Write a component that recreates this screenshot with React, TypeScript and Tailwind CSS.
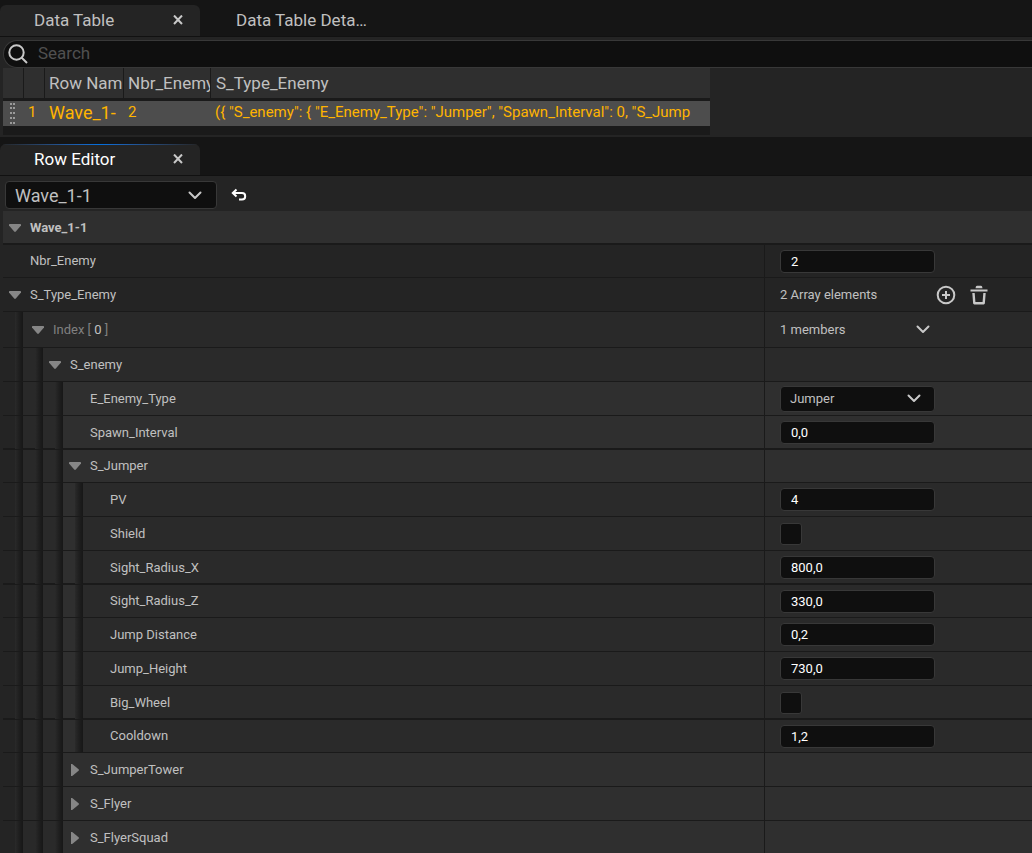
import { useState, type ReactNode } from "react";
import clsx from "clsx";

type Control = "text" | "bool" | "enum" | "array" | "members";

interface Property {
  name: string;
  depth: number;
  control?: Control;
  value?: string;
  expanded?: boolean;
  index?: number;
  size?: "short" | "tall";
  // Every few rows the separator is two pixels thick
  thick?: boolean;
}

const properties: Property[] = [
  { name: "Nbr_Enemy", depth: 0, control: "text", value: "2", size: "short" },
  { name: "S_Type_Enemy", depth: 0, control: "array", value: "2 Array elements", expanded: true },
  { name: "Index", depth: 1, control: "members", value: "1 members", expanded: true, index: 0, size: "tall" },
  { name: "S_enemy", depth: 2, expanded: true },
  { name: "E_Enemy_Type", depth: 3, control: "enum", value: "Jumper" },
  { name: "Spawn_Interval", depth: 3, control: "text", value: "0,0", thick: true },
  { name: "S_Jumper", depth: 3, expanded: true, size: "short" },
  { name: "PV", depth: 4, control: "text", value: "4" },
  { name: "Shield", depth: 4, control: "bool" },
  { name: "Sight_Radius_X", depth: 4, control: "text", value: "800,0", thick: true },
  { name: "Sight_Radius_Z", depth: 4, control: "text", value: "330,0", size: "short" },
  { name: "Jump Distance", depth: 4, control: "text", value: "0,2" },
  { name: "Jump_Height", depth: 4, control: "text", value: "730,0" },
  { name: "Big_Wheel", depth: 4, control: "bool", thick: true },
  { name: "Cooldown", depth: 4, control: "text", value: "1,2", size: "short" },
  { name: "S_JumperTower", depth: 3, expanded: false },
  { name: "S_Flyer", depth: 3, expanded: false },
  { name: "S_FlyerSquad", depth: 3, expanded: false },
];

const depthColors = ["bg-[#242424]", "bg-[#292929]", "bg-[#2a2a2a]", "bg-[#2f2f2f]", "bg-[#2a2a2a]"];

const rowJson = '({ "S_enemy": { "E_Enemy_Type": "Jumper", "Spawn_Interval": 0, "S_Jump';

const Chevron = ({ className }: { className?: string }) => (
  <svg viewBox="0 0 14 9" fill="none" stroke="#c8c8c8" strokeWidth="2" className={clsx("h-[9px] w-[14px]", className)}>
    <path d="M1.5 1.5 L7 7 L12.5 1.5" strokeLinecap="round" strokeLinejoin="round" />
  </svg>
);

const Arrow = ({ open }: { open: boolean }) => (
  <svg viewBox="0 0 12 12" className="h-3 w-3" fill="#868686">
    {open ? (
      <path d="M0 2.5 Q0 2 .6 2 H11.4 Q12 2 12 2.5 V3.5 L6.8 9.6 Q6 10.4 5.2 9.6 L0 3.5Z" />
    ) : (
      <path d="M2 0 H3.2 L9.6 5.2 Q10.4 6 9.6 6.8 L3.2 12 H2Z" />
    )}
  </svg>
);

const Tab = ({ title, active, focused }: { title: string; active?: boolean; focused?: boolean }) => (
  <div
    className={clsx(
      "relative flex h-[31px] w-[200px] items-center justify-between overflow-hidden pr-4 text-[17px]",
      active && "rounded-t-md bg-[#242424] pl-[34px]",
      !active && "pl-9",
      focused ? "text-white" : "text-[#c0c0c0]"
    )}
  >
    {focused && (
      <span className="absolute inset-x-0 top-0 h-px bg-linear-to-r from-[#242424] via-[#0070e0] to-[#242424]" />
    )}
    <span className="whitespace-nowrap">{title}</span>
    {active && (
      <button type="button" aria-label={`Close ${title}`} className="flex h-3 w-3 items-start justify-center pb-1">
        <svg viewBox="0 0 10 10" className="h-[10px] w-[10px] shrink-0" stroke="#c8c8c8" strokeWidth="2">
          <path d="M1 .5 L9 9 M9 .5 L1 9" />
        </svg>
      </button>
    )}
  </div>
);

const DataTable = () => (
  <div className="ml-[3px] h-[67px] w-[707px] max-w-full overflow-hidden bg-[#1a1a1a]">
    <table className="w-full table-fixed border-separate border-spacing-0 whitespace-nowrap text-left">
      <colgroup>
        <col className="w-[21px]" />
        <col className="w-[21px]" />
        <col className="w-[79px]" />
        <col className="w-[87px]" />
        <col />
      </colgroup>
      <thead>
        <tr className="h-[30px] bg-[#2f2f2f] text-[17px] text-[#c0c0c0]">
          <th className="border-r border-[#1a1a1a] p-0" />
          <th className="border-r border-[#1a1a1a] p-0" />
          <th className="overflow-hidden border-r border-[#1a1a1a] p-0 pt-[2px] pl-1 font-normal">Row Nam</th>
          <th className="overflow-hidden border-r border-[#1a1a1a] p-0 pt-[2px] pl-1 font-normal">Nbr_Enemy</th>
          <th className="p-0 pt-[2px] pl-[5px] font-normal">S_Type_Enemy</th>
        </tr>
      </thead>
      <tbody className="[&_td]:border-t-[3px] [&_td]:border-[#1a1a1a]">
        <tr className="h-[28px] bg-[#4d4d4d] text-[15px] leading-[22px] text-[#ffb400]">
          <td className="p-0 pl-[7px]">
            <svg viewBox="0 0 5 21" className="h-[21px] w-[5px]" fill="#9a9a9a">
              {[0, 4, 9, 14, 19].map((y) => (
                <path key={y} d={`M0 ${y}h2v2h-2z M3 ${y}h2v2h-2z`} />
              ))}
            </svg>
          </td>
          <td className="p-0 pb-[3px] pl-1">1</td>
          <td className="overflow-hidden p-0 pb-px pl-1 text-[18px]">Wave_1-</td>
          <td className="p-0 pb-[3px] pl-1">2</td>
          <td className="p-0 pr-[7px] pb-[3px] pl-1">
            <div className="overflow-hidden">{rowJson}</div>
          </td>
        </tr>
      </tbody>
    </table>
  </div>
);

const fieldStyle = "w-[155px] rounded-[4px] border border-[#383838] bg-[#0f0f0f] outline-none";

const ValueCell = ({ property }: { property: Property }) => {
  const { control, name, value } = property;
  const [text, setText] = useState(value ?? "");

  if (control === "text") {
    return (
      <input
        aria-label={name}
        value={text}
        onChange={(e) => setText(e.target.value)}
        className={clsx(fieldStyle, "h-[23px] px-[10px] text-white")}
      />
    );
  }
  if (control === "bool") {
    return (
      <input
        type="checkbox"
        aria-label={name}
        className="h-[22px] w-[22px] appearance-none rounded-[3px] border border-[#383838] bg-[#0f0f0f] checked:bg-[#0070e0]"
      />
    );
  }
  if (control === "enum") {
    return (
      <div className="relative">
        <select aria-label={name} className={clsx(fieldStyle, "block h-[26px] appearance-none px-[9px]")}>
          <option>Jumper</option>
          <option>JumperTower</option>
          <option>Flyer</option>
          <option>FlyerSquad</option>
        </select>
        <Chevron className="pointer-events-none absolute top-2 right-[14px]" />
      </div>
    );
  }
  if (control === "array") {
    return (
      <>
        <span className="w-[156px]">{value}</span>
        <button type="button" aria-label="Add element">
          <svg viewBox="0 0 20 20" className="h-5 w-5" fill="none" stroke="#c8c8c8" strokeWidth="2">
            <circle cx="10" cy="10" r="8.3" />
            <path d="M10 6v8M6 10h8" />
          </svg>
        </button>
        <button type="button" aria-label="Remove all elements" className="ml-[13px]">
          <svg viewBox="0 0 20 20" className="h-5 w-5" fill="none" stroke="#c8c8c8">
            <path d="M1.5 5.5h17" strokeWidth="2" />
            <path d="M6.5 3.2 Q6.8 .8 8 .8h4Q13.2 .8 13.5 3.2Z" fill="#c8c8c8" stroke="none" />
            <path d="M4.5 8l.8 10.2h9.4L15.5 8" strokeWidth="2.4" strokeLinejoin="round" />
          </svg>
        </button>
      </>
    );
  }
  if (control === "members") {
    return (
      <>
        <span className="w-[136px]">{value}</span>
        <button type="button" aria-label="Element actions">
          <Chevron />
        </button>
      </>
    );
  }
  return null;
};

const Label = ({ property }: { property: Property }): ReactNode => {
  if (property.index === undefined) return property.name;
  return (
    <span className="text-[#808080]">
      {property.name} [ <span className="text-[#c0c0c0]">{property.index}</span> ]
    </span>
  );
};

const PropertyRow = ({ property }: { property: Property }) => {
  const { depth, expanded, size, thick } = property;

  return (
    <div
      className={clsx(
        "grid shrink-0 grid-cols-[1fr_268px] border-b border-[#1a1a1a]",
        depthColors[depth],
        size === "short" && "h-[33px]",
        size === "tall" && "h-9",
        !size && "h-[34px]",
        thick && "shadow-[inset_0_-1px_#1a1a1a]"
      )}
    >
      <div className="flex min-w-0">
        {/* Indentation gutters */}
        {depthColors.slice(0, depth).map((color, i) => (
          <div key={i} className={clsx("flex w-5 justify-end", color, thick && "shadow-[inset_0_-1px_#1a1a1a]")}>
            <div className="w-[8px] bg-linear-to-r from-[#2a2a2a] via-[#1f1f1f] to-[#171717]" />
          </div>
        ))}
        <div className={clsx("flex items-center gap-[9px]", depth === 1 ? "pl-[9px]" : "pl-[6px]")}>
          {expanded === undefined ? (
            <span className="w-3" />
          ) : (
            <button type="button" aria-label={`Toggle ${property.name}`}>
              <Arrow open={expanded} />
            </button>
          )}
          <span>
            <Label property={property} />
          </span>
        </div>
      </div>
      <div className="flex items-center border-l border-[#1a1a1a] pl-[15px]">
        <ValueCell property={property} />
      </div>
    </div>
  );
};

export default function App() {
  return (
    <div className="flex h-screen flex-col overflow-hidden bg-[#242424] font-['Roboto',sans-serif] text-[13px] text-[#c0c0c0]">
      <div className="flex h-[37px] shrink-0 items-end border-b border-[#111111] bg-[#151515]">
        <Tab title="Data Table" active />
        <Tab title="Data Table Deta…" />
      </div>

      <div className="shrink-0 pt-[3px] pb-[2px]">
        <label className="ml-[3px] flex h-7 items-center rounded-l-full border border-r-0 border-[#383838] bg-[#0f0f0f] pl-1">
          <svg viewBox="0 0 20 20" className="h-5 w-5" fill="none" stroke="#c8c8c8" strokeWidth="2">
            <circle cx="8.5" cy="8.5" r="7.2" />
            <path d="M13.5 13.5 L19 19" />
          </svg>
          <input
            type="search"
            aria-label="Search"
            placeholder="Search"
            className="ml-[10px] min-w-0 flex-1 bg-transparent text-[17px] outline-none placeholder:text-[#505050]"
          />
        </label>
        <DataTable />
      </div>

      <div className="flex h-[39px] shrink-0 items-end border-b border-[#111111] bg-[#151515]">
        <Tab title="Row Editor" active focused />
      </div>

      <div className="flex shrink-0 items-center gap-[14px] px-[5px] pt-[5px] pb-[2px]">
        <div className="relative">
          <select
            aria-label="Row"
            className="block h-7 w-[212px] appearance-none rounded-[4px] border border-[#383838] bg-[#0f0f0f] px-[9px] text-[18px] outline-none"
          >
            <option>Wave_1-1</option>
          </select>
          <Chevron className="pointer-events-none absolute top-[10px] right-[15px]" />
        </div>
        <button type="button" aria-label="Undo">
          <svg viewBox="0 0 16 14" className="h-[14px] w-4" fill="none" stroke="#ffffff" strokeWidth="2">
            <path d="M5.5 1.5 L1.8 5 L5.5 8.5" />
            <path d="M2 5 H11 Q14.2 5 14.2 8.2 Q14.2 11.6 11 11.6 H8" />
          </svg>
        </button>
      </div>

      <div className="ml-[3px] flex min-h-0 flex-1 flex-col overflow-hidden">
        <div className="flex h-[34px] shrink-0 items-center gap-[9px] border-b border-[#1a1a1a] bg-[#2f2f2f] pl-[6px] font-bold shadow-[inset_0_-1px_#1a1a1a]">
          <button type="button" aria-label="Toggle Wave_1-1">
            <Arrow open />
          </button>
          Wave_1-1
        </div>
        {properties.map((property) => (
          <PropertyRow key={property.name} property={property} />
        ))}
      </div>
    </div>
  );
}
